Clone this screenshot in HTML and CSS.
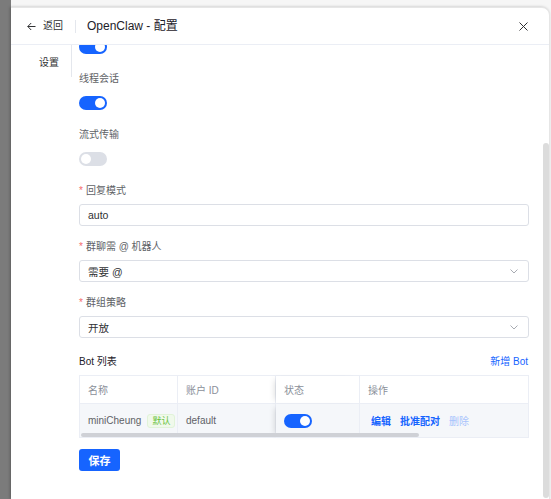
FILE: index.html
```html
<!DOCTYPE html>
<html lang="zh-CN">
<head>
    <meta charset="UTF-8">
    <title>OpenClaw - 配置</title>
    <link rel="stylesheet" href="styles.css">
</head>
<body>
    <!-- 遮罩 -->
    <div class="mask"></div>

    <!-- 抽屉 -->
    <div class="drawer">
        <div class="drawer-header">
            <a class="back" href="#">
                <svg width="9" height="9" viewBox="0 0 9 9" fill="none" stroke="#303133" stroke-width="1">
                    <path d="M8.5 4.5H0.8M4.2 1L0.8 4.5L4.2 8"/>
                </svg>
                <span>返回</span>
            </a>
            <span class="divider"></span>
            <span class="title">OpenClaw - 配置</span>
            <button class="close" type="button">
                <svg width="9" height="9" viewBox="0 0 9 9" fill="none" stroke="#303133" stroke-width="1">
                    <path d="M0.5 0.5L8.5 8.5M8.5 0.5L0.5 8.5"/>
                </svg>
            </button>
        </div>

        <div class="drawer-body">
            <!-- 侧边菜单 -->
            <div class="side-menu">
                <div class="menu-item">设置</div>
            </div>

            <!-- 配置表单 -->
            <div class="content" id="content">
                <div class="form-item">
                    <div class="switch-wrap"><span class="switch on"></span></div>
                </div>

                <div class="form-item">
                    <div class="label">线程会话</div>
                    <div class="switch-wrap"><span class="switch on"></span></div>
                </div>

                <div class="form-item">
                    <div class="label">流式传输</div>
                    <div class="switch-wrap"><span class="switch"></span></div>
                </div>

                <div class="form-item">
                    <div class="label required">回复模式</div>
                    <div class="input">auto</div>
                </div>

                <div class="form-item">
                    <div class="label required">群聊需 @ 机器人</div>
                    <div class="input select">
                        <span>需要 @</span>
                        <svg width="8" height="5" viewBox="0 0 8 5" fill="none" stroke="#a8abb2" stroke-width="1">
                            <path d="M0.5 0.5L4 4L7.5 0.5"/>
                        </svg>
                    </div>
                </div>

                <div class="form-item">
                    <div class="label required">群组策略</div>
                    <div class="input select">
                        <span>开放</span>
                        <svg width="8" height="5" viewBox="0 0 8 5" fill="none" stroke="#a8abb2" stroke-width="1">
                            <path d="M0.5 0.5L4 4L7.5 0.5"/>
                        </svg>
                    </div>
                </div>

                <!-- Bot 列表 -->
                <div class="list-header">
                    <span class="list-title">Bot 列表</span>
                    <a class="link-add" href="#">新增 Bot</a>
                </div>

                <div class="table">
                    <div class="th">名称</div>
                    <div class="th">账户 ID</div>
                    <div class="th fixed">状态</div>
                    <div class="th">操作</div>

                    <div class="td">miniCheung <span class="tag">默认</span></div>
                    <div class="td">default</div>
                    <div class="td fixed"><span class="switch on"></span></div>
                    <div class="td ops">
                        <a href="#">编辑</a>
                        <a href="#">批准配对</a>
                        <a href="#" class="disabled">删除</a>
                    </div>

                    <div class="hbar"></div>
                </div>

                <button class="btn-save" type="button">保存</button>
            </div>

            <!-- 滚动条 -->
            <div class="scroll-thumb"></div>
        </div>
    </div>

    <script>
        // 打开时定位到底部
        var content = document.getElementById('content');
        content.scrollTop = content.scrollHeight;
    </script>
</body>
</html>
```

FILE: styles.css
```css
/* Styles généraux */
* {
    box-sizing: border-box;
}

html, body {
    margin: 0;
    height: 100%;
}

body {
    display: flex;
    font-family: "Liberation Sans", "Noto Sans CJK SC", sans-serif;
    font-size: 10px;
    color: #303133;
    background: #f6f6f6;
    overflow: hidden;
}

a {
    text-decoration: none;
}

/* Mask */
.mask {
    width: 11px;
    flex-shrink: 0;
    background: #7b7b7b;
}

/* Drawer */
.drawer {
    flex: 1;
    margin: 7px 1px 0 0;
    background: #fff;
    border: 1px solid #e6e6e6;
    border-left: none;
    border-bottom: none;
    border-top-right-radius: 8px;
    box-shadow: -1px 0 3px rgba(0, 0, 0, 0.25);
    display: flex;
    flex-direction: column;
    min-height: 0;
}

.drawer-header {
    height: 37px;
    flex-shrink: 0;
    display: flex;
    align-items: center;
    padding: 0 21px 0 16px;
    border-bottom: 1px solid #ebeef5;
}

.back {
    display: flex;
    align-items: center;
    gap: 7px;
    color: #303133;
    font-size: 10px;
    line-height: 14px;
}

.divider {
    width: 1px;
    height: 13px;
    background: #e4e7ed;
    margin: 0 11px 0 12px;
}

.title {
    flex: 1;
    font-size: 12px;
    line-height: 16px;
    color: #1d2129;
}

.close {
    border: none;
    background: none;
    padding: 0;
    width: 9px;
    height: 9px;
    display: flex;
    cursor: pointer;
}

.drawer-body {
    position: relative;
    flex: 1;
    display: flex;
    min-height: 0;
}

/* Menu */
.side-menu {
    width: 61px;
    flex-shrink: 0;
}

.menu-item {
    height: 32px;
    padding: 4px 0 0 28px;
    line-height: 28px;
    border-right: 1px solid #e4e7ed;
    color: #303133;
}

/* Formulaire */
.content {
    flex: 1;
    overflow-y: auto;
    scrollbar-width: none;
    padding: 0 20px 28px 7px;
}

.scroll-thumb {
    position: absolute;
    right: 0;
    top: 98px;
    width: 6px;
    height: 355px;
    border-radius: 3px;
    background: #dcdcdc;
}

.form-item {
    margin-bottom: 12px;
}

.label {
    line-height: 14px;
    padding-top: 2px;
    margin-bottom: 6px;
    color: #606266;
}

.label.required::before {
    content: "*";
    color: #f56c6c;
    margin-right: 3px;
}

.switch-wrap {
    height: 22px;
    display: flex;
    align-items: center;
}

.switch {
    display: inline-block;
    position: relative;
    width: 28px;
    height: 14px;
    border-radius: 7px;
    background: #dcdfe6;
}

.switch::after {
    content: "";
    position: absolute;
    top: 2px;
    left: 2px;
    width: 10px;
    height: 10px;
    border-radius: 50%;
    background: #fff;
}

.switch.on {
    background: #1664ff;
}

.switch.on::after {
    left: 16px;
}

.input {
    height: 22px;
    border: 1px solid #dcdfe6;
    border-radius: 3px;
    padding: 0 10px 0 8px;
    display: flex;
    align-items: center;
    justify-content: space-between;
    font-size: 10.5px;
    color: #303133;
}

/* Bot list */
.list-header {
    height: 20px;
    margin-bottom: 5px;
    padding-right: 1px;
    display: flex;
    align-items: center;
    justify-content: space-between;
}

.list-title {
    color: #1d2129;
}

.link-add {
    color: #1664ff;
}

.table {
    position: relative;
    display: grid;
    grid-template-columns: 98px 98px 84px 1fr;
    border-top: 1px solid #ebeef5;
    border-left: 1px solid #ebeef5;
    margin-bottom: 11px;
}

.th,
.td {
    display: flex;
    align-items: center;
    padding-left: 8px;
    border-right: 1px solid #ebeef5;
    border-bottom: 1px solid #ebeef5;
}

.th {
    height: 28px;
    background: #fff;
    color: #8a8f99;
}

.td {
    height: 34px;
    background: #f5f7fa;
    color: #606266;
}

.fixed {
    position: relative;
    z-index: 1;
    box-shadow: -5px 0 6px -4px rgba(0, 0, 0, 0.15);
}

.tag {
    margin-left: 6px;
    height: 14px;
    padding: 0 4px;
    font-size: 9px;
    line-height: 12px;
    border: 1px solid #e1f3d8;
    border-radius: 3px;
    background: #f0f9eb;
    color: #67c23a;
}

.td.ops {
    padding-left: 11px;
    gap: 9px;
}

.ops a {
    color: #1664ff;
    font-weight: 600;
}

.ops a.disabled {
    color: #a8c3fd;
    font-weight: 400;
}

.hbar {
    position: absolute;
    left: 1px;
    bottom: 1px;
    width: 338px;
    height: 4px;
    border-radius: 2px;
    background: #cfd1d6;
    z-index: 2;
}

.btn-save {
    display: block;
    width: 41px;
    height: 22px;
    border: none;
    border-radius: 3px;
    background: #1664ff;
    color: #fff;
    font: inherit;
    font-size: 11px;
    font-weight: 600;
    cursor: pointer;
}
```
